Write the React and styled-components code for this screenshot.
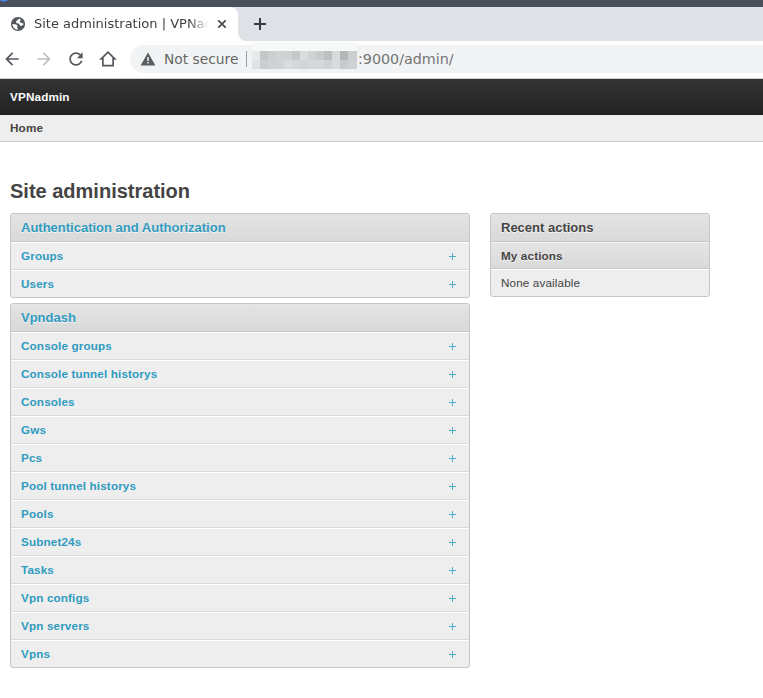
import React from "react";
import styled, { createGlobalStyle } from "styled-components";

const Global = createGlobalStyle`
  * { box-sizing: border-box; }
  body { margin: 0; background: #fff; overflow: hidden; }
`;

const Page = styled.div`
  width: 100%;
  height: 698px;
  overflow: hidden;
  color: #444;
  font: 12px/15px "Liberation Sans", Arial, sans-serif;
`;

const WindowEdge = styled.div`
  height: 7px;
  background: #495059;
  overflow: hidden;
`;
const EdgeIcon = styled.svg`
  display: block;
`;

const TabStrip = styled.div`
  display: flex;
  height: 34px;
  background: #dee1e6;
`;
const Tab = styled.div`
  display: flex;
  align-items: center;
  width: 238px;
  padding-left: 10px;
  background: #fff;
  border-radius: 2px 8px 0 0;
  font: 13px/20px "DejaVu Sans", sans-serif;
  color: #3c4043;
`;
const TabTitle = styled.div`
  width: 175px;
  margin-left: 8px;
  overflow: hidden;
  white-space: nowrap;
  mask-image: linear-gradient(to right, #000 154px, transparent 175px);
`;
const TabClose = styled.svg`
  margin-left: 7px;
`;
const NewTabArea = styled.div`
  flex: 1;
  display: flex;
  align-items: center;
  padding-left: 15px;
  background: #dee1e6;
  border-bottom-left-radius: 8px;
`;
const StripBase = styled.div`
  flex: 1;
  display: flex;
  background: linear-gradient(#dee1e6 50%, #fff 50%);
`;

const Toolbar = styled.div`
  display: flex;
  align-items: center;
  height: 38px;
  padding-bottom: 2px;
  background: #fff;
  border-bottom: 1px solid #d0d0d0;
`;
const NavIcons = styled.div`
  display: flex;
  gap: 12px;
  width: 130px;
  padding-left: 2px;
`;
const AddressBar = styled.div`
  flex: 1;
  display: flex;
  align-items: center;
  height: 28px;
  padding-left: 10px;
  background: #f1f3f4;
  border-radius: 14px 0 0 14px;
  font: 14.3px/28px "DejaVu Sans", sans-serif;
  color: #666;
`;
const Security = styled.span`
  width: 82px;
  margin-left: 8px;
  white-space: nowrap;
  font-size: 13.8px;
`;
const Divider = styled.span`
  width: 1px;
  height: 16px;
  margin-right: 5px;
  background: #9a9da0;
`;
const Mosaic = styled.svg`
  flex: none;
  margin-top: -7px;
`;
const Url = styled.span`
  margin-left: 1px;
  color: #747474;
`;

const Header = styled.header`
  height: 36px;
  padding: 10px 10px 0;
  background: linear-gradient(#333, #222);
  color: #fff;
  font-size: 11.7px;
  letter-spacing: 0.15px;
  font-weight: bold;
`;
const Breadcrumbs = styled.nav`
  height: 27px;
  padding: 5px 10px 0;
  background: #eee;
  border-bottom: 1px solid #ccc;
  font-size: 11.7px;
  letter-spacing: 0.15px;
  font-weight: bold;
`;
const Title = styled.h1`
  margin: 37px 0 0 10px;
  font-size: 20px;
  line-height: 24px;
`;
const Columns = styled.main`
  display: flex;
  align-items: flex-start;
  gap: 20px;
  padding: 10px 10px 0;
`;
const Column = styled.div`
  display: flex;
  flex-direction: column;
  gap: 5px;
  width: ${(p) => p.$width}px;
`;
const Module = styled.section`
  overflow: hidden;
  background: #eee;
  border: 1px solid #c7c7c7;
  border-radius: 3px;
`;
const ModuleTitle = styled.h2`
  height: 28px;
  margin: 0;
  padding: 5px 10px 0;
  background: linear-gradient(#e4e4e4, #d9d9d9);
  border-bottom: 1px solid #c7c7c7;
  color: ${(p) => (p.$link ? "#309bbf" : "#444")};
  font-size: 13px;
  line-height: 17px;
  text-shadow: 0 1px 0 #f5f5f5;
`;
const SubTitle = styled.h3`
  height: 27px;
  margin: 0;
  padding: 5px 10px 0;
  background: linear-gradient(#e4e4e4, #d9d9d9);
  border-top: 1px solid #f5f5f5;
  border-bottom: 1px solid #c7c7c7;
  font-size: 11.7px;
  letter-spacing: 0.13px;
  line-height: 15px;
  text-shadow: 0 1px 0 #f5f5f5;
`;
const Row = styled.div`
  display: flex;
  justify-content: space-between;
  height: 28px;
  padding: 5px 13px 0 10px;
  border-top: 1px solid #fff;
  border-bottom: 1px solid #d9d9d9;
  color: #309bbf;
  font-size: 11.7px;
  letter-spacing: 0.14px;
  font-weight: bold;
  line-height: 15px;
  &:last-child { height: 27px; border-bottom: 0; }
`;
const Plus = styled.svg`
  margin-top: 5px;
`;
const Note = styled.p`
  height: 27px;
  margin: 0;
  padding: 5px 10px 0;
  border-top: 1px solid #fff;
  font-size: 11.7px;
  letter-spacing: 0.13px;
  line-height: 15px;
`;

const mosaicRows = [
  ["#e8e9ea", "#c5c6c7", "#cdcecf", "#d1d2d3", "#d0d1d2", "#c6c7c8", "#dbdcdd", "#d1d2d3", "#c9cacb", "#bebfc0", "#d9dadb", "#b5b6b7", "#cdcecf"],
  ["#e1e2e3", "#cccdce", "#d0d1d2", "#d1d2d3", "#dadbdc", "#d6d7d8", "#d3d4d5", "#d6d7d8", "#d6d7d8", "#d1d2d3", "#dadbdc", "#c9cacb", "#d0d1d2"],
];

const apps = [
  ["Authentication and Authorization", ["Groups", "Users"]],
  ["Vpndash", ["Console groups", "Console tunnel historys", "Consoles", "Gws", "Pcs", "Pool tunnel historys", "Pools", "Subnet24s", "Tasks", "Vpn configs", "Vpn servers", "Vpns"]],
];

const materialPaths = {
  back: "M20 11H7.83l5.59-5.59L12 4l-8 8 8 8 1.41-1.41L7.83 13H20v-2z",
  forward: "M12 4l-1.41 1.41L16.17 11H4v2h12.17l-5.58 5.59L12 20l8-8z",
  reload: "M17.65 6.35C16.2 4.9 14.21 4 12 4c-4.42 0-7.99 3.58-7.99 8s3.57 8 7.99 8c3.73 0 6.84-2.55 7.73-6h-2.08c-.82 2.33-3.04 4-5.65 4-3.31 0-6-2.69-6-6s2.69-6 6-6c1.66 0 3.14.69 4.22 1.78L13 11h7V4l-2.35 2.35z",
};

const NavIcon = ({ name, color = "#54585d" }) => (
  <svg width="20" height="20" viewBox="0 0 24 24" fill={color}>
    <path d={materialPaths[name]} />
  </svg>
);

export default function App() {
  return (
    <Page>
      <Global />
      <WindowEdge>
        <EdgeIcon width="12" height="7">
          <circle cx="4" cy="-4" r="5.8" fill="#4c86e8" />
        </EdgeIcon>
      </WindowEdge>
      <TabStrip>
        <Tab>
          <svg width="16" height="16" viewBox="0 0 16 16">
            <circle cx="8" cy="8" r="7.1" fill="#54585d" />
            <path d="M9.2 2.7C7.8 3.7 6 4.6 6 6.1c0 1.6 2.7 1.2 3.3 2.1.5.8.4 1.6 1.3 1.6 1.3 0 2.9-.9 3.1-2.1C11.9 7.3 9.9 6.6 9.8 5.5 9.7 4.7 10.8 4.1 11 3.4zM2.3 8c2 .2 4.2.2 5 1.4.7 1-.6 1.6-.3 2.4.2.6 1.2.8 1.1 1.9C5.2 13.7 2.5 11.5 2.3 8z" fill="#fff" />
          </svg>
          <TabTitle>Site administration | VPNadmin</TabTitle>
          <TabClose width="12" height="12" stroke="#45494d" strokeWidth="1.7">
            <path d="M2.3 2.3 9.7 9.7M9.7 2.3 2.3 9.7" />
          </TabClose>
        </Tab>
        <StripBase>
          <NewTabArea>
            <svg width="14" height="14" stroke="#36393d" strokeWidth="2">
              <path d="M1 7H13M7 1V13" />
            </svg>
          </NewTabArea>
        </StripBase>
      </TabStrip>
      <Toolbar>
        <NavIcons>
          <NavIcon name="back" />
          <NavIcon name="forward" color="#bcbec0" />
          <NavIcon name="reload" />
          <svg width="20" height="20" viewBox="0 0 20 20" fill="none" stroke="#54585d" strokeWidth="1.7">
            <path d="M3.2 9.9 10 3.1l6.8 6.8h-1.7v6.8H4.9V9.9z" />
          </svg>
        </NavIcons>
        <AddressBar>
          <svg width="16" height="16" viewBox="0 0 16 16">
            <path d="M8 1.5 15.4 14.5H.6z" fill="#5a5c5e" />
            <path d="M8 6v4M8 11v1.6" stroke="#f1f3f4" strokeWidth="1.5" />
          </svg>
          <Security>Not secure</Security>
          <Divider />
          <Mosaic width="105" height="27" shapeRendering="crispEdges">
            <rect width="105" height="9" fill="#f7f8f8" />
            {mosaicRows.map((row, y) =>
              row.map((fill, x) => (
                <rect key={`${x}-${y}`} x={x * 8} y={9 + y * 9} width="9" height="9" fill={fill} />
              ))
            )}
          </Mosaic>
          <Url>:9000/admin/</Url>
        </AddressBar>
      </Toolbar>
      <Header>VPNadmin</Header>
      <Breadcrumbs>Home</Breadcrumbs>
      <Title>Site administration</Title>
      <Columns>
        <Column $width={460}>
          {apps.map(([title, models]) => (
            <Module key={title}>
              <ModuleTitle $link>{title}</ModuleTitle>
              {models.map((model) => (
                <Row key={model}>
                  {model}
                  <Plus width="7" height="7" stroke="#51acc6" shapeRendering="crispEdges">
                    <path d="M0 3.5H7M3.5 0V7" />
                  </Plus>
                </Row>
              ))}
            </Module>
          ))}
        </Column>
        <Column $width={220}>
          <Module>
            <ModuleTitle>Recent actions</ModuleTitle>
            <SubTitle>My actions</SubTitle>
            <Note>None available</Note>
          </Module>
        </Column>
      </Columns>
    </Page>
  );
}
